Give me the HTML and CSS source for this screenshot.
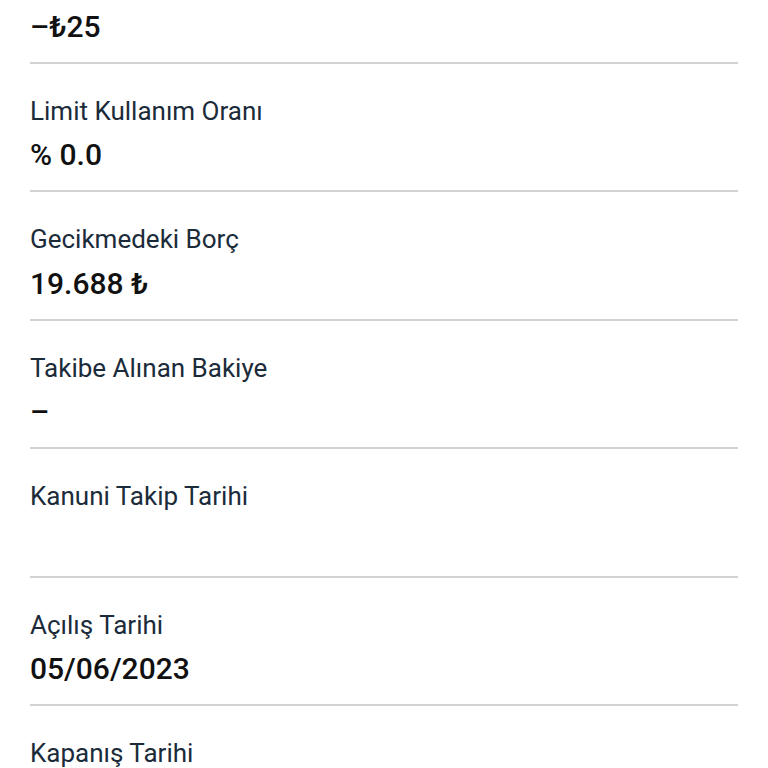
FILE: index.html
```html
<!DOCTYPE html>
<html lang="tr">
<head>
<meta charset="utf-8">
<link rel="stylesheet" href="styles.css">
</head>
<body>
<div class="list">
  <div class="row first">
    <div class="value">–₺25</div>
  </div>
  <div class="row">
    <div class="label">Limit Kullanım Oranı</div>
    <div class="value">% 0.0</div>
  </div>
  <div class="row">
    <div class="label">Gecikmedeki Borç</div>
    <div class="value">19.688 ₺</div>
  </div>
  <div class="row">
    <div class="label">Takibe Alınan Bakiye</div>
    <div class="value">–</div>
  </div>
  <div class="row">
    <div class="label">Kanuni Takip Tarihi</div>
    <div class="value">&nbsp;</div>
  </div>
  <div class="row">
    <div class="label">Açılış Tarihi</div>
    <div class="value">05/06/2023</div>
  </div>
  <div class="row">
    <div class="label">Kapanış Tarihi</div>
    <div class="value">&nbsp;</div>
  </div>
</div>
</body>
</html>
```
FILE: styles.css
```css
html, body {
  margin: 0;
  padding: 0;
  background: #ffffff;
  overflow: hidden;
}
body {
  font-family: Roboto, "Noto Sans", sans-serif;
  width: 768px;
  height: 768px;
}
.list {
  padding: 0 30px;
}
.row {
  padding: 32px 0 17px;
  border-bottom: 2px solid #d2d2d2;
  display: flex;
  flex-direction: column;
  gap: 11.5px;
}
.row.first {
  padding-top: 8.5px;
}
.label {
  font-size: 26px;
  line-height: 30px;
  color: #1b2b3a;
  font-weight: 400;
}
.value {
  font-size: 30px;
  line-height: 36px;
  color: #111111;
  font-weight: 500;
}
```
